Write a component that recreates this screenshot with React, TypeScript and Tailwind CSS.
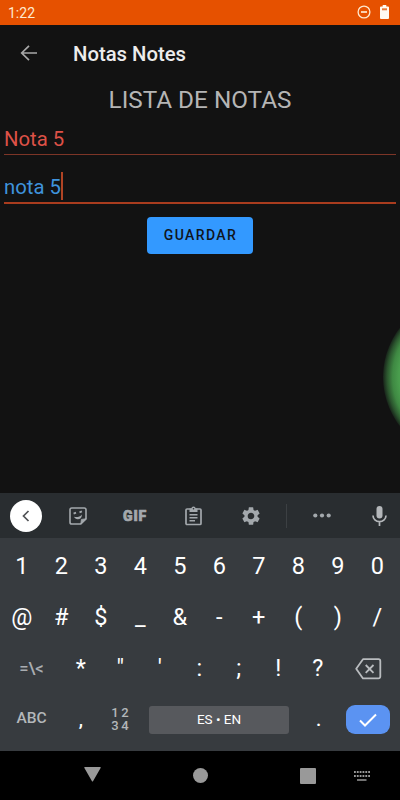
import type { ReactNode } from "react";

const numberKeys = ["1", "2", "3", "4", "5", "6", "7", "8", "9", "0"];
const symbolKeys = ["@", "#", "$", "_", "&", "-", "+", "(", ")", "/"];
const punctuationKeys = ["*", '"', "'", ":", ";", "!", "?"];

function Key({ children }: { children: ReactNode }) {
  return <div className="w-[39.5px] shrink-0 text-center text-[23.5px] leading-[51px] text-white">{children}</div>;
}

function StatusBar() {
  return (
    <div className="flex h-[24.5px] items-center justify-between bg-[#e65100] pl-[8px] pr-[11px]">
      <span className="pt-[2px] text-[14px] leading-[24px] text-[#ffe9cf]">1:22</span>
      <div className="flex items-center gap-[9px]">
        <svg width="14" height="14" viewBox="0 0 14 14" fill="none" stroke="#ffe9cf" strokeWidth="1.3">
          <circle cx="7" cy="7" r="5.9" />
          <path d="M4 7h6" strokeWidth="1.7" />
        </svg>
        <svg width="9" height="14" viewBox="0 0 9 14">
          <path d="M2.7 0h3.6v1.5H8a1 1 0 0 1 1 1V13a1 1 0 0 1-1 1H1a1 1 0 0 1-1-1V2.5a1 1 0 0 1 1-1h1.7z" fill="#fffaf2" />
          <path d="M2 3.3h5v2H2z" fill="#e67a3c" />
        </svg>
      </div>
    </div>
  );
}

function Toolbar() {
  return (
    <div className="flex h-[45px] items-center bg-[#292d30] text-[#a3a8ac]">
      <div className="ml-[10px] flex size-8 items-center justify-center rounded-full bg-white">
        <svg width="8" height="12" viewBox="0 0 8 12" fill="none" stroke="#505255" strokeWidth="1.7">
          <path d="M6.5 1 1.500 6l5 5" />
        </svg>
      </div>
      {/* Stickers */}
      <svg className="ml-[27px]" width="18" height="18" viewBox="0 0 18 18" fill="none" stroke="currentColor" strokeWidth="1.6">
        <path d="M2.8 1h12.4A1.8 1.8 0 0 1 17 2.800v9L11.800 17h-9A1.800 1.800 0 0 1 1 15.200V2.800A1.800 1.800 0 0 1 2.800 1z" />
        <path d="M11.800 17l.6-4.600L17 11.800z" fill="currentColor" strokeWidth="0.8" />
        <path d="M4.600 6.600l2.400-.9M10.500 5.300l2.400-.9" strokeWidth="1.9" />
        <path d="M5 9.800c3 .8 6-.1 7.900-2.400.1 3.400-2 4.900-4.200 4.800-1.700 0-3-.9-3.700-2.400z" fill="currentColor" stroke="none" />
      </svg>
      <span className="ml-[36px] w-[26px] text-[14px] font-black leading-none tracking-[0.9px] [-webkit-text-stroke:0.7px_#a3a8ac]">GIF</span>
      {/* Clipboard */}
      <svg className="ml-[36px]" width="17" height="20" viewBox="0 0 17 20" fill="none" stroke="currentColor" strokeWidth="1.7">
        <rect x="1" y="3" width="15" height="15.5" rx="1" />
        <path d="M4.500 2.500h8V6h-8z" fill="currentColor" stroke="none" />
        <circle cx="8.500" cy="2.600" r="2.100" fill="currentColor" stroke="none" />
        <circle cx="8.500" cy="2.800" r=".8" fill="#292d30" stroke="none" />
        <path d="M4.500 8.800h8M4.500 11.800h8M4.500 14.800h5.500" strokeWidth="1.4" />
      </svg>
      {/* Settings */}
      <svg className="ml-[38px]" width="22" height="22" viewBox="0 0 24 24" fill="currentColor">
        <path d="M19.140 12.940c.04-.3.060-.61.060-.94 0-.32-.02-.64-.07-.94l2.030-1.580a.49.49 0 0 0 .12-.61l-1.920-3.320a.488.488 0 0 0-.59-.22l-2.390.96c-.5-.38-1.030-.7-1.620-.94l-.36-2.540a.484.484 0 0 0-.48-.41h-3.840c-.24 0-.43.17-.47.41l-.36 2.540c-.59.24-1.130.57-1.620.94l-2.390-.96c-.22-.08-.47 0-.59.22L2.740 8.870c-.12.21-.08.47.12.61l2.030 1.580c-.05.3-.09.63-.09.94s.02.64.07.94l-2.030 1.580a.49.49 0 0 0-.12.61l1.920 3.320c.12.22.37.29.59.22l2.390-.96c.5.38 1.030.7 1.620.94l.36 2.540c.05.24.24.41.48.41h3.840c.24 0 .44-.17.47-.41l.36-2.540c.59-.24 1.130-.56 1.620-.94l2.390.96c.22.08.47 0 .59-.22l1.920-3.320c.12-.22.07-.47-.12-.61l-2.010-1.580zM12 15.600A3.610 3.610 0 0 1 8.400 12c0-1.980 1.620-3.600 3.600-3.600s3.600 1.620 3.600 3.600-1.620 3.600-3.600 3.600z" />
      </svg>
      <div className="ml-[24px] h-6 w-px bg-[#3c4043]" />
      <svg className="ml-[26px]" width="18" height="5" viewBox="0 0 18 5" fill="currentColor">
        <circle cx="2.3" cy="2.5" r="2.1" />
        <circle cx="9" cy="2.5" r="2.1" />
        <circle cx="15.7" cy="2.5" r="2.1" />
      </svg>
      {/* Microphone */}
      <svg className="ml-[41px]" width="15" height="20" viewBox="0 0 15 20" fill="none" stroke="#b4b7ba" strokeWidth="1.7">
        <rect x="4.5" y="0" width="6" height="12.5" rx="3" fill="#b4b7ba" stroke="none" />
        <path d="M1 9.500a6.500 6.100 0 0 0 13 0M7.500 15.500V20" />
      </svg>
    </div>
  );
}

function Keyboard() {
  return (
    <div className="h-[213px] bg-[#373b3f] pt-[3px]">
      <div className="flex pl-[2px]">
        {numberKeys.map((k) => <Key key={k}>{k}</Key>)}
      </div>
      <div className="flex pl-[2px]">
        {symbolKeys.map((k) => <Key key={k}>{k}</Key>)}
      </div>
      <div className="flex items-center pl-[2px]">
        <div className="w-[59px] text-center text-[16.5px] font-medium leading-[51px] text-[#a9adb1]">=\&lt;</div>
        {punctuationKeys.map((k) => <Key key={k}>{k}</Key>)}
        <svg className="ml-[17px]" width="27" height="22" viewBox="0 0 27 22" fill="none" stroke="#b9bcbf" strokeWidth="1.8">
          <path d="M8 1.200h15.500a1.800 1.800 0 0 1 1.800 1.800v15.600a1.800 1.800 0 0 1-1.800 1.800H8L1.200 10.800z" strokeLinejoin="round" />
          <path d="m10.700 7 7.800 7.800m0-7.800-7.800 7.800" />
        </svg>
      </div>
      <div className="flex h-[51px] items-center pl-[2px]">
        <div className="w-[59px] pb-px text-center text-[15.5px] font-medium text-[#b3b7ba]">ABC</div>
        <div className="w-[39.5px] text-center text-[19px] font-medium leading-[51px] text-white">,</div>
        <div className="w-[39.5px] pb-px pl-[2px] text-center text-[13px] font-medium leading-[13.5px] tracking-[2.5px] text-[#b3b7ba]">
          <div>12</div>
          <div>34</div>
        </div>
        <div className="ml-[9px] flex h-7 w-[140px] items-center justify-center rounded-[3px] bg-[#57595d] text-[13.5px] text-white">
          ES • EN
        </div>
        <div className="ml-[10px] w-[39.5px] text-center text-[19px] font-medium leading-[51px] text-white">.</div>
        <div className="ml-[7.5px] flex h-[29px] w-[44px] items-center justify-center rounded-[9px] bg-[#5b93f2]">
          <svg width="18" height="14" viewBox="0 0 18 14" fill="none" stroke="#fff" strokeWidth="2">
            <path d="m1 7.500 5 5L17 1.500" />
          </svg>
        </div>
      </div>
    </div>
  );
}

function NavBar() {
  return (
    <div className="flex h-[49px] items-center bg-black text-[#999]">
      <svg className="mb-[2px] ml-[84px]" width="17" height="15" viewBox="0 0 17 15" fill="currentColor">
        <path d="M1 0h15a.7.7 0 0 1 .6 1.100L9 14.200a.6.6 0 0 1-1 0L.4 1.100A.7.7 0 0 1 1 0z" />
      </svg>
      <div className="ml-[92px] size-[15px] rounded-full bg-[#999]" />
      <div className="ml-[92px] size-[16px] rounded-[1px] bg-[#999]" />
      <svg className="ml-[38px]" width="16" height="10" viewBox="0 0 16 10" stroke="currentColor" fill="none">
        <path d="M0 1h16M0 5h16" strokeWidth="1.8" strokeDasharray="1.8 1.04" />
        <path d="M3 9h9.500" strokeWidth="1.5" />
      </svg>
    </div>
  );
}

export default function App() {
  return (
    <div className="relative flex h-[800px] w-[400px] flex-col overflow-hidden bg-[#121212] font-['Roboto',sans-serif]">
      <StatusBar />
      <div className="flex h-[59px] items-center pl-[20px]">
        <svg className="mb-[2px]" width="18" height="16" viewBox="0 0 18 16" fill="none" stroke="#a8a8a8" strokeWidth="1.7">
          <path d="M17 8H1.500M9 .8 1.700 8 9 15.200" />
        </svg>
        <h1 className="ml-[35px] text-[20.3px] font-medium text-[#ececec]">Notas Notes</h1>
      </div>
      <div className="h-[31px] text-center text-[24.3px] leading-[31px] text-[#b5b5b5]">LISTA DE NOTAS</div>
      <div className="mx-1 h-[40px] border-b-[1.5px] border-[#7d3527] pt-[12px] text-[20.3px] leading-[25px] text-[#dd5147]">Nota 5</div>
      <div className="mx-1 flex h-[49px] items-start border-b-2 border-[#a93c1e] pt-[17px] text-[20.3px] leading-[30px] text-[#3f93dc]">
        nota 5
        <span className="h-[28px] w-[2px] bg-[#b04424]" />
      </div>
      <div className="mt-[13px] flex h-[37px] w-[106px] items-center justify-center self-center rounded-[4px] bg-[#3399ff] pl-px pt-px text-[14px] font-medium tracking-[1.4px] text-[#10151c]">
        GUARDAR
      </div>

      {/* Floating bubble peeking in from the right edge */}
      <div className="absolute left-[383px] top-[297px] size-[160px] rounded-full bg-[radial-gradient(circle_closest-side,#4a9f4e_80%,#3f8943_88%,#2b552e_95%,#18241a_100%)]" />

      <div className="mt-auto">
        <Toolbar />
        <Keyboard />
        <NavBar />
      </div>
    </div>
  );
}
